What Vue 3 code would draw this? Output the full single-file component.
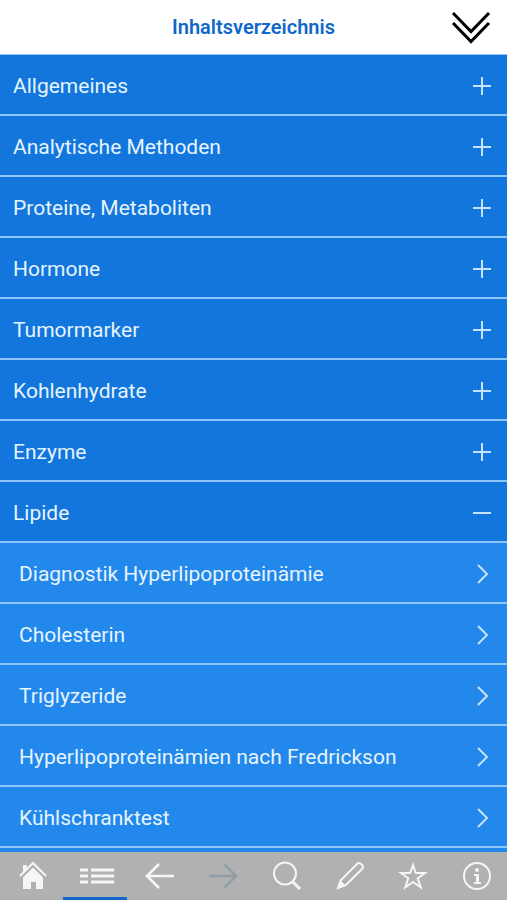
<template>
  <div class="screen">
    <header class="header">
      <h1 class="title">Inhaltsverzeichnis</h1>
      <button class="collapse" type="button" aria-label="Alle zuklappen" @click="openChapter = null">
        <svg width="40" height="34" viewBox="0 0 40 34">
          <path d="M2 3 L20 21.500 L38 3 M2 13 L20 31.500 L38 13"/>
        </svg>
      </button>
    </header>

    <main class="list">
      <template v-for="chapter in chapters" :key="chapter.name">
        <button
            class="row"
            type="button"
            :aria-expanded="openChapter === chapter.name"
            @click="toggle(chapter.name)">
          <span>{{ chapter.name }}</span>
          <svg class="row-icon" width="20" height="20" viewBox="0 0 20 20">
            <path v-if="openChapter === chapter.name" d="M1 10 H19"/>
            <path v-else d="M1 10 H19 M10 1 V19"/>
          </svg>
        </button>
        <template v-if="openChapter === chapter.name">
          <a v-for="page in chapter.pages" :key="page" class="row sub" href="#">
            <span>{{ page }}</span>
            <svg class="row-icon" width="20" height="20" viewBox="0 0 20 20">
              <path d="M6 1 L15 10 L6 19"/>
            </svg>
          </a>
        </template>
      </template>
    </main>

    <nav class="toolbar">
      <button
          v-for="tool in tools"
          :key="tool.id"
          class="tool"
          :class="{active: tool.id === 'toc'}"
          type="button"
          :disabled="tool.id === 'forward'"
          :aria-label="tool.label">
        <svg v-if="tool.id === 'home'" width="30" height="30" viewBox="0 0 30 30">
          <path class="solid" d="M5 15 L15 6 L25 15 V28 H18 V21 H13 V28 H5 Z M5 4 H9 V9 L5 13 Z"/>
          <path class="gap" d="M3 17 L15 5 L27 17"/>
          <path d="M2 15 L15 2 L28 15"/>
        </svg>
        <svg v-else-if="tool.id === 'toc'" width="36" height="30" viewBox="0 0 36 30">
          <path class="thick" d="M1 9 H9 M12 9 H35 M1 15 H9 M12 15 H35 M1 21 H9 M12 21 H35"/>
        </svg>
        <svg v-else-if="tool.id === 'back'" width="30" height="30" viewBox="0 0 30 30">
          <path class="arrow" d="M29 15 H2 M14 3 L2 15 L14 27"/>
        </svg>
        <svg v-else-if="tool.id === 'forward'" width="30" height="30" viewBox="0 0 30 30">
          <path class="arrow" d="M1 15 H28 M16 3 L28 15 L16 27"/>
        </svg>
        <svg v-else-if="tool.id === 'search'" width="30" height="30" viewBox="0 0 30 30">
          <circle cx="13" cy="12.500" r="11"/>
          <path d="M20 20 L22 22"/>
          <path class="thick" d="M21 21 L28 28"/>
        </svg>
        <svg v-else-if="tool.id === 'edit'" width="30" height="30" viewBox="0 0 30 30">
          <path d="M3 27 L6 19 L22 3 Q24 1 26 3 L27 4 Q29 6 27 8 L11 24 Z"/>
          <path class="solid" d="M2 28 L5 19 L11 25 Z"/>
        </svg>
        <svg v-else-if="tool.id === 'favorites'" width="30" height="30" viewBox="0 0 30 30">
          <path d="M15 4 L17.800 12 H27 L19.700 17.300 L22.800 26.500 L15 21 L7.200 26.500 L10.300 17.300 L3 12 H12.200 Z"/>
        </svg>
        <svg v-else width="30" height="30" viewBox="0 0 30 30">
          <circle cx="15" cy="15" r="13"/>
          <circle class="solid" cx="15" cy="9" r="2"/>
          <path class="solid" d="M12 13 H17 V21 H19 V23 H12 V21 H14 V15 H12 Z"/>
        </svg>
      </button>
    </nav>
  </div>
</template>


<script setup>

import {ref} from "vue";

const openChapter = ref("Lipide");

const chapters = [
  {name: "Allgemeines"},
  {name: "Analytische Methoden"},
  {name: "Proteine, Metaboliten"},
  {name: "Hormone"},
  {name: "Tumormarker"},
  {name: "Kohlenhydrate"},
  {name: "Enzyme"},
  {
    name: "Lipide",
    pages: [
      "Diagnostik Hyperlipoproteinämie",
      "Cholesterin",
      "Triglyzeride",
      "Hyperlipoproteinämien nach Fredrickson",
      "Kühlschranktest",
    ],
  },
]

const tools = [
  {id: "home", label: "Startseite"},
  {id: "toc", label: "Inhaltsverzeichnis"},
  {id: "back", label: "Zurück"},
  {id: "forward", label: "Vorwärts"},
  {id: "search", label: "Suche"},
  {id: "edit", label: "Notizen"},
  {id: "favorites", label: "Favoriten"},
  {id: "info", label: "Info"},
]

const toggle = (name) => {
  openChapter.value = openChapter.value === name ? null : name;
}

</script>


<style>

body {
  margin: 0;
}

</style>

<style scoped>

.screen {
  display: flex;
  flex-direction: column;
  height: 100vh;
  background: #2388ec;
  font-family: Roboto, sans-serif;
}

button {
  border: 0;
  padding: 0;
  background: none;
  font: inherit;
}

svg {
  display: block;
  flex: none;
  fill: none;
  stroke: currentColor;
  stroke-width: 2;
}

.header {
  display: grid;
  grid-template-columns: 56px 1fr 56px;
  align-items: center;
  flex: none;
  height: 54px;
  border-bottom: 1px solid #8fc4f8;
  background: white;
}

.title {
  grid-column: 2;
  margin: 0;
  color: #1068c8;
  font-size: 20px;
  font-weight: 600;
  line-height: 24px;
  text-align: center;
}

.collapse {
  color: black;
}

.collapse svg {
  stroke-width: 3;
}

.list {
  flex: 1;
  min-height: 0;
  overflow-y: auto;
}

.row {
  display: flex;
  align-items: center;
  justify-content: space-between;
  box-sizing: border-box;
  width: 100%;
  height: 61px;
  padding: 3px 15px 0 13px;
  border-bottom: 2px solid #8fc6fa;
  background: #1276dc;
  color: #e6f4ff;
  font-size: 21px;
  line-height: 28px;
  text-align: left;
  text-decoration: none;
}

.sub {
  padding-left: 19px;
  background: #2388ec;
}

.row-icon {
  color: #c4e2fd;
}

.toolbar {
  display: grid;
  grid-template-columns: repeat(8, 1fr);
  flex: none;
  height: 48px;
  background: #b1b1b1;
}

.tool {
  display: flex;
  align-items: center;
  justify-content: center;
  padding-left: 3px;
  border-top: 3px solid transparent;
  border-bottom: 3px solid transparent;
  color: #f6f6f6;
}

.tool.active {
  border-bottom-color: #1068c8;
}

.tool:disabled {
  color: #929ea5;
}

.thick {
  stroke-width: 3;
}

.arrow {
  stroke-width: 2.500;
}

.gap {
  stroke: #b1b1b1;
}

.solid {
  fill: currentColor;
  stroke: none;
}

</style>
